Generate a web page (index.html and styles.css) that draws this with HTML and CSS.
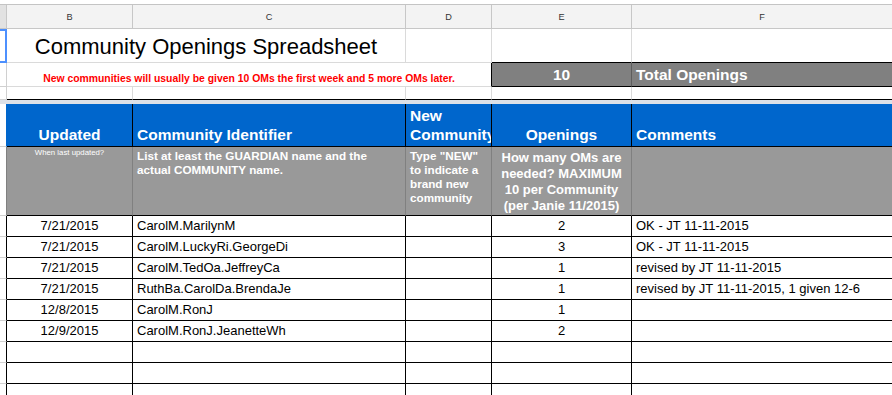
FILE: index.html
```html
<!DOCTYPE html>
<html lang="en">
<head>
<meta charset="utf-8">
<title>Community Openings Spreadsheet</title>
<link rel="stylesheet" href="styles.css">
</head>
<body>
<div class="sheet">
  <!-- column letters -->
  <div class="cell hdr stub"></div>
  <div class="cell hdr">B</div>
  <div class="cell hdr">C</div>
  <div class="cell hdr">D</div>
  <div class="cell hdr">E</div>
  <div class="cell hdr last">F</div>

  <!-- title row -->
  <div class="cell stub sel"></div>
  <div class="cell title">Community Openings Spreadsheet</div>
  <div class="cell"></div>
  <div class="cell boxtop"></div>
  <div class="cell boxtop last"></div>

  <!-- note / total row -->
  <div class="cell stub"></div>
  <div class="cell note">New communities will usually be given 10 OMs the first week and 5 more OMs later.</div>
  <div class="cell total num">10</div>
  <div class="cell total last">Total Openings</div>

  <!-- spacer row -->
  <div class="cell stub"></div>
  <div class="cell spacer"></div>
  <div class="cell spacer"></div>
  <div class="cell spacer"></div>
  <div class="cell spacer"></div>
  <div class="cell spacer last"></div>

  <!-- freeze bar -->
  <div class="band"></div>

  <!-- blue header -->
  <div class="cell stub stub-blue"></div>
  <div class="cell head center">Updated</div>
  <div class="cell head">Community Identifier</div>
  <div class="cell head">New Community</div>
  <div class="cell head center">Openings</div>
  <div class="cell head last">Comments</div>

  <!-- descriptions -->
  <div class="cell stub stub-gray"></div>
  <div class="cell desc tiny">When last updated?</div>
  <div class="cell desc">List at least the GUARDIAN name and the actual COMMUNITY name.</div>
  <div class="cell desc">Type "NEW" to indicate a brand new community</div>
  <div class="cell desc big">How many OMs are needed? MAXIMUM 10 per Community (per Janie 11/2015)</div>
  <div class="cell desc last"></div>

  <!-- data -->
  <div class="cell stub dstub"></div>
  <div class="cell data center-text">7/21/2015</div>
  <div class="cell data">CarolM.MarilynM</div>
  <div class="cell data"></div>
  <div class="cell data center-text">2</div>
  <div class="cell data last">OK - JT 11-11-2015</div>

  <div class="cell stub dstub"></div>
  <div class="cell data center-text">7/21/2015</div>
  <div class="cell data">CarolM.LuckyRi.GeorgeDi</div>
  <div class="cell data"></div>
  <div class="cell data center-text">3</div>
  <div class="cell data last">OK - JT 11-11-2015</div>

  <div class="cell stub dstub"></div>
  <div class="cell data center-text">7/21/2015</div>
  <div class="cell data">CarolM.TedOa.JeffreyCa</div>
  <div class="cell data"></div>
  <div class="cell data center-text">1</div>
  <div class="cell data last">revised by JT 11-11-2015</div>

  <div class="cell stub dstub"></div>
  <div class="cell data center-text">7/21/2015</div>
  <div class="cell data">RuthBa.CarolDa.BrendaJe</div>
  <div class="cell data"></div>
  <div class="cell data center-text">1</div>
  <div class="cell data last">revised by JT 11-11-2015, 1 given 12-6</div>

  <div class="cell stub dstub"></div>
  <div class="cell data center-text">12/8/2015</div>
  <div class="cell data">CarolM.RonJ</div>
  <div class="cell data"></div>
  <div class="cell data center-text">1</div>
  <div class="cell data last"></div>

  <div class="cell stub dstub"></div>
  <div class="cell data center-text">12/9/2015</div>
  <div class="cell data">CarolM.RonJ.JeanetteWh</div>
  <div class="cell data"></div>
  <div class="cell data center-text">2</div>
  <div class="cell data last"></div>

  <div class="cell stub dstub"></div>
  <div class="cell data"></div>
  <div class="cell data"></div>
  <div class="cell data"></div>
  <div class="cell data"></div>
  <div class="cell data last"></div>

  <div class="cell stub dstub"></div>
  <div class="cell data"></div>
  <div class="cell data"></div>
  <div class="cell data"></div>
  <div class="cell data"></div>
  <div class="cell data last"></div>

  <div class="cell stub dstub"></div>
  <div class="cell data"></div>
  <div class="cell data"></div>
  <div class="cell data"></div>
  <div class="cell data"></div>
  <div class="cell data last"></div>
</div>
</body>
</html>
```

FILE: styles.css
```css
html, body {
  margin: 0;
  padding: 0;
  background: #fff;
  overflow: hidden;
}

body {
  font-family: "Liberation Sans", Arial, Helvetica, sans-serif;
  color: #000;
}

.sheet {
  display: grid;
  grid-template-columns: 7px 126px 273px 86px 140px 1fr;
  grid-template-rows: 24px 34px 24px 13px 4px 43px 69px repeat(9, 21px);
  width: 892px;
  margin-top: 4px;
  border-top: 1px solid #c4c4c4;
}

.cell {
  box-sizing: border-box;
  min-width: 0;
  overflow: hidden;
  border-right: 1px solid #dadada;
  border-bottom: 1px solid #dadada;
}

.last {
  border-right: 0;
}

/* column letters */
.hdr {
  background: #f3f3f3;
  border-color: #c7c7c7;
  font-size: 9.2px;
  color: #333;
  display: flex;
  align-items: center;
  justify-content: center;
}

/* row-number stub */
.stub {
  background: #fff;
  border-right-color: #d0d0d0;
  border-bottom-color: #d0d0d0;
}

.hdr.stub {
  background: #e2e2e2;
  border-color: #c7c7c7;
}

.sel {
  border: 2px solid #4d90fe;
  border-left: 0;
}

.stub-blue {
  border-right-color: #0066cc;
}

.stub-gray {
  border-right-color: #808080;
}

.dstub {
  border-right-color: #000;
}

/* title */
.title {
  grid-column: span 2;
  font-size: 22px;
  line-height: 25px;
  white-space: nowrap;
  display: flex;
  align-items: flex-end;
  justify-content: center;
  padding-bottom: 3px;
}

.boxtop {
  border-bottom-color: #000;
}

/* red note */
.note {
  grid-column: span 3;
  color: #ff0000;
  font-weight: bold;
  font-size: 10.4px;
  line-height: 12px;
  white-space: nowrap;
  display: flex;
  align-items: flex-end;
  justify-content: center;
  padding-bottom: 1px;
  border-right-color: #000;
}

.total {
  background: #808080;
  color: #fff;
  font-weight: bold;
  font-size: 15.5px;
  line-height: 19px;
  white-space: nowrap;
  display: flex;
  align-items: flex-end;
  padding: 0 4px 2px;
  border-bottom-color: #000;
  border-right-color: #5e5e5e;
}

.total.num {
  justify-content: center;
}

.spacer {
  border-bottom-color: #000;
}

.band {
  grid-column: 1 / -1;
  background: #dde1e8;
}

/* blue header */
.head {
  background: #0066cc;
  color: #fff;
  font-weight: bold;
  font-size: 15.5px;
  line-height: 19px;
  display: flex;
  align-items: flex-end;
  padding: 0 4px 2px;
  border-right-color: #000;
  border-bottom-color: #000;
}

.center {
  justify-content: center;
  text-align: center;
}

/* gray description row */
.desc {
  background: #999;
  color: #fff;
  font-weight: bold;
  font-size: 11.7px;
  line-height: 14px;
  padding: 2px 4px 0;
  border-right-color: #808080;
  border-bottom-color: #000;
}

.desc.big {
  font-size: 13px;
  line-height: 16px;
  padding-top: 3px;
  text-align: center;
}

.desc.tiny {
  font-size: 7.8px;
  line-height: 10px;
  font-weight: normal;
  text-align: center;
  padding-top: 1px;
}

/* data rows */
.data {
  border-right-color: #000;
  border-bottom-color: #000;
  font-size: 13px;
  line-height: 20px;
  padding: 0 4px;
  white-space: nowrap;
}

.center-text {
  text-align: center;
}
```
